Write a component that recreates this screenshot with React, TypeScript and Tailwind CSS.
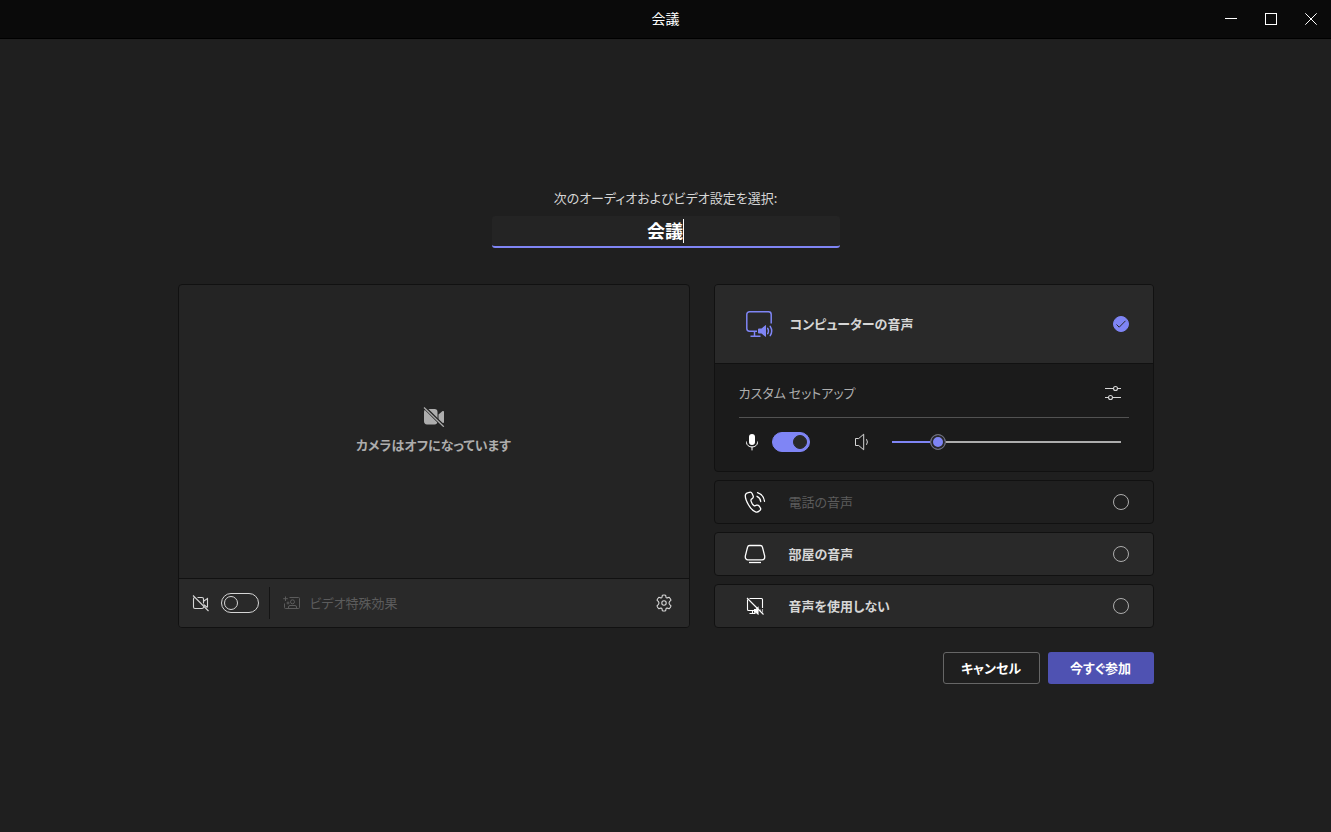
import { useState } from "react"
import type { ReactNode } from "react"

const audioOptions = [
  { id: "phone", label: "電話の音声", icon: <PhoneIcon />, disabled: true },
  { id: "room", label: "部屋の音声", icon: <RoomIcon />, disabled: false },
  { id: "none", label: "音声を使用しない", icon: <NoAudioIcon />, disabled: false },
]

function MinimizeIcon() {
  return (
    <svg width="12" height="12" viewBox="0 0 12 12" fill="none" stroke="currentColor" shapeRendering="crispEdges">
      <path d="M0 5.5h12" />
    </svg>
  )
}

function MaximizeIcon() {
  return (
    <svg width="12" height="12" viewBox="0 0 12 12" fill="none" stroke="currentColor">
      <rect x="0.5" y="0.5" width="11" height="11" />
    </svg>
  )
}

function CloseIcon() {
  return (
    <svg width="12" height="12" viewBox="0 0 12 12" fill="none" stroke="currentColor">
      <path d="M0.3 0.3l11.4 11.4M11.7 0.3L0.3 11.7" />
    </svg>
  )
}

function CameraOffFilledIcon() {
  return (
    <svg width="22" height="20" viewBox="0 0 22 20" fill="currentColor">
      <path d="M4 2h7.5A3 3 0 0 1 14.500 5v9a3 3 0 0 1-3 3.500H4A3.200 3.200 0 0 1 1 14.300V5.200A3.200 3.200 0 0 1 4 2z" />
      <path d="M15.500 7.500l3.800-3.200c.6-.5 1.700-.2 1.700.7v10c0 .9-1 1.200-1.700.7l-3.800-3.200z" />
      <path d="M1.200 0L21.500 20.300" stroke="#242424" strokeWidth="3.200" />
      <path d="M1 .5L20.800 19.800" stroke="currentColor" strokeWidth="1.200" />
    </svg>
  )
}

function CameraOffIcon() {
  return (
    <svg width="18" height="18" viewBox="0 0 18 18" fill="none" stroke="currentColor" strokeWidth="1.1">
      <path d="M5.500 3.500H10A1.500 1.500 0 0 1 11.500 5v4.500M11.500 12.500v.5a1.500 1.500 0 0 1-1.500 1.500H3A1.500 1.500 0 0 1 1.500 13V5A1.500 1.500 0 0 1 3 3.500" />
      <path d="M11.500 7.200l4-2.700v8.800M11.500 10.500l4 3" />
      <path d="M1 1.500l15.500 15.500" />
    </svg>
  )
}

function EffectsIcon() {
  return (
    <svg width="20" height="16" viewBox="0 0 20 16" fill="none" stroke="currentColor">
      <path d="M7.500 2.500H16.500a1 1 0 0 1 1 1v9a1 1 0 0 1-1 1H3.500a1 1 0 0 1-1-1V8.500" />
      <circle cx="10.500" cy="6.800" r="2" />
      <path d="M6.500 13.500v-1.500a1.500 1.500 0 0 1 1.500-1.500h5a1.500 1.500 0 0 1 1.500 1.500v1.500" />
      <path d="M3.500 1.500v4.500M1.200 3.700h4.600M6 6.500v3M4.500 8h3" />
    </svg>
  )
}

function GearIcon() {
  return (
    <svg width="18" height="18" viewBox="0 0 18 18" fill="none" stroke="currentColor" strokeWidth="1.100" strokeLinejoin="round">
      <path d="M7.400 1.200Q9 .8 10.600 1.200L11 3.200Q11.300 4 12.200 3.900L14.200 3.300Q15.500 4.600 16 6.200L14.500 7.700Q13.500 9 14.500 10.300L16 11.800Q15.500 13.400 14.200 14.700L12.200 14.100Q11.300 14 11 14.800L10.600 16.800Q9 17.200 7.400 16.800L7 14.800Q6.700 14 5.800 14.100L3.800 14.700Q2.500 13.400 2 11.800L3.500 10.300Q4.500 9 3.500 7.700L2 6.200Q2.500 4.600 3.800 3.300L5.800 3.900Q6.700 4 7 3.200Z" />
      <circle cx="9" cy="9" r="2.200" />
    </svg>
  )
}

function ComputerAudioIcon() {
  return (
    <svg width="28" height="28" viewBox="0 0 28 28" fill="none" stroke="currentColor" strokeWidth="1.500">
      <path d="M12 21.200H4.500A2.700 2.700 0 0 1 1.800 18.500V4.500A2.700 2.700 0 0 1 4.500 1.800h19A2.700 2.700 0 0 1 26.200 4.500V13.500" />
      <path d="M9.500 21.200v5M5.500 26.200h10" />
      <path d="M14 18.500h2.500l4-3.300c.2-.2.500 0 .5.300v11c0 .3-.3.500-.5.300l-4-3.300H14a1 1 0 0 1-1-1v-3a1 1 0 0 1 1-1z" fill="currentColor" stroke="none" />
      <path d="M22.700 18.300q1.500 2.700 0 5.400M25.200 16.300q3 4.700 0 9.400" strokeLinecap="round" />
    </svg>
  )
}

function CheckIcon() {
  return (
    <svg width="16" height="16" viewBox="0 0 16 16" fill="none" stroke="#292929" className="pointer-events-none absolute inset-0">
      <path d="M3.500 8.500l2.700 2.700L12.500 4.800" />
    </svg>
  )
}

function SlidersIcon() {
  return (
    <svg width="16" height="16" viewBox="0 0 16 16" fill="none" stroke="currentColor" strokeWidth="1.100">
      <path d="M0 3.500h8M12.500 3.500H16M0 12.500h3.500M7.500 12.500H16" />
      <circle cx="10.500" cy="3.500" r="2" />
      <circle cx="5.500" cy="12.500" r="2" />
    </svg>
  )
}

function MicIcon() {
  return (
    <svg width="14" height="18" viewBox="0 0 14 18" fill="none" stroke="currentColor">
      <rect x="4" y="1" width="6" height="11" rx="3" fill="currentColor" stroke="none" />
      <path d="M1.500 9v.5a5.500 4.500 0 0 0 11 0V9M7 14v3" strokeLinecap="round" />
    </svg>
  )
}

function SpeakerIcon() {
  return (
    <svg width="16" height="18" viewBox="0 0 16 18" fill="none" stroke="currentColor" strokeLinejoin="round">
      <path d="M1.500 5.500h3.200l5-4.300v15.600l-5-4.300H1.500z" />
      <path d="M12.700 6.500q1.600 2.500 0 5" strokeLinecap="round" />
    </svg>
  )
}

function PhoneIcon() {
  return (
    <svg width="22" height="22" viewBox="0 0 22 22" fill="none" stroke="currentColor" strokeWidth="1.300" strokeLinecap="round" strokeLinejoin="round">
      <path d="M4.200 1.700l1.400-.4c1-.3 2 .2 2.500 1.200l1 2.200c.4.900.2 1.800-.5 2.500L7.100 8.600c-.2.200-.2.400-.2.600.1 1 .5 2 1.100 3.100.6 1 1.300 1.800 2.100 2.400.2.100.4.200.6.100l1.900-.6c.9-.3 1.900 0 2.500.8l1.100 1.700c.6.800.5 2-.3 2.700l-.7.700c-1 .9-2.500 1.200-3.700.7C9.200 20 6.700 17.600 4.600 14 2.400 10.300 1.200 7 1.300 4.500c.1-1.300 1.200-2.400 2.900-2.800z" />
      <path d="M13 5.300a6.500 6.500 0 0 1 3.700 5.200M13.500 1.700a10.200 10.200 0 0 1 7 8.600" />
    </svg>
  )
}

function RoomIcon() {
  return (
    <svg width="22" height="20" viewBox="0 0 22 20" fill="none" stroke="currentColor" strokeWidth="1.300">
      <path d="M5.700 1.500h10.600a2.300 2.300 0 0 1 2.200 1.800l2.200 8.700v1.300a2.500 2.500 0 0 1-2.500 2.500H3.800a2.500 2.500 0 0 1-2.500-2.500V12L3.500 3.300a2.300 2.300 0 0 1 2.200-1.800z" />
      <path d="M5 18.500h12" />
    </svg>
  )
}

function NoAudioIcon() {
  return (
    <svg width="18" height="18" viewBox="0 0 18 18" fill="none" stroke="currentColor" strokeWidth="1.100">
      <path d="M3.500 1.500H15.500a1 1 0 0 1 1 1V11M8 13.500H2.500a1 1 0 0 1-1-1V2.500M6.500 13.500v3M3.500 16.500h6" />
      <path d="M8.500 12.500h1.500l2-2v6.500l-2-1.700H8.500z" fill="currentColor" />
      <path d="M1 1l16.500 16.500" />
      <path d="M14 12.500l.8 1.200M16.500 12v3.500" strokeOpacity="0.600" />
    </svg>
  )
}

function Toggle({ label, defaultChecked }: { label: string; defaultChecked?: boolean }) {
  return (
    <input
      type="checkbox"
      role="switch"
      aria-label={label}
      defaultChecked={defaultChecked}
      className="flex h-5 w-[38px] shrink-0 appearance-none items-center rounded-full border border-[#d6d6d6] px-0.5 before:size-[14px] before:rounded-full before:border before:border-[#d6d6d6] checked:justify-end checked:border-[#7f85f5] checked:bg-[#7f85f5] checked:before:border-[#292929] checked:before:bg-[#292929]"
    />
  )
}

function AudioRadio({ id, checked, disabled, onSelect }: { id: string; checked: boolean; disabled?: boolean; onSelect: () => void }) {
  return (
    <span className="relative size-4 shrink-0">
      <input
        id={id}
        type="radio"
        name="audio"
        checked={checked}
        disabled={disabled}
        onChange={onSelect}
        className="block size-4 appearance-none rounded-full border border-[#adadad] checked:border-[#7f85f5] checked:bg-[#7f85f5]"
      />
      {checked && <CheckIcon />}
    </span>
  )
}

function WindowButton({ label, children }: { label: string; children: ReactNode }) {
  return (
    <button aria-label={label} className="flex h-full w-10 items-center justify-center text-white">
      {children}
    </button>
  )
}

export default function App() {
  const [name, setName] = useState("会議")
  const [audio, setAudio] = useState("computer")
  const [volume, setVolume] = useState(18)

  return (
    <div className="flex min-h-screen flex-col bg-[#1f1f1f] font-['Noto_Sans_CJK_JP',sans-serif] text-[13px] leading-5 text-[#d6d6d6] [font-feature-settings:'palt']">
      {/* Title bar */}
      <header className="grid h-[39px] shrink-0 grid-cols-[1fr_auto_1fr] items-center border-b border-black bg-[#0a0a0a]">
        <h1 className="col-start-2 pb-0.5 text-sm text-white">会議</h1>
        <div className="flex h-full justify-end">
          <WindowButton label="最小化"><MinimizeIcon /></WindowButton>
          <WindowButton label="最大化"><MaximizeIcon /></WindowButton>
          <WindowButton label="閉じる"><CloseIcon /></WindowButton>
        </div>
      </header>

      <main className="flex flex-1 flex-col items-center justify-center px-6">
        <label htmlFor="meeting-name" className="leading-[21px]">次のオーディオおよびビデオ設定を選択:</label>
        <div className="mt-2 flex h-8 w-full max-w-[348px] items-center justify-center rounded-[3px] border-b-2 border-[#7f85f5] bg-[#242424]">
          <input
            id="meeting-name"
            value={name}
            onChange={(e) => setName(e.target.value)}
            className="min-w-0 pb-0.5 text-lg leading-6 font-bold text-white caret-transparent outline-none [field-sizing:content]"
          />
          <span className="h-6 w-px bg-white" />
        </div>

        <div className="mt-9 grid w-full max-w-[976px] grid-cols-[64fr_55fr] gap-6">
          {/* Camera preview */}
          <section className="flex flex-col overflow-hidden rounded border border-[#111111] bg-[#242424]">
            <div className="flex flex-1 flex-col items-center justify-center gap-2 pb-0.5 text-[#adadad]">
              <CameraOffFilledIcon />
              <p className="font-semibold">カメラはオフになっています</p>
            </div>
            <div className="flex h-[49px] items-center border-t border-[#111111] bg-[#292929] pr-4 pl-[13px]">
              <CameraOffIcon />
              <div className="ml-[11px]">
                <Toggle label="カメラ" />
              </div>
              <span className="mx-[10px] mr-3 h-8 w-px bg-[#141414]" />
              <button disabled className="flex items-center gap-2 text-[#5c5c5c]">
                <EffectsIcon />
                ビデオ特殊効果
              </button>
              <button aria-label="デバイスの設定" className="ml-auto">
                <GearIcon />
              </button>
            </div>
          </section>

          {/* Audio options */}
          <section className="flex flex-col gap-2">
            <div className="overflow-hidden rounded border border-[#111111] bg-[#1b1b1b]">
              <label htmlFor="computer" className="flex h-[79px] items-center border-b border-[#111111] bg-[#292929] pr-6 pl-[30px]">
                <span className="text-[#7f85f5]"><ComputerAudioIcon /></span>
                <span className="ml-[17px] flex-1 font-semibold">コンピューターの音声</span>
                <AudioRadio id="computer" checked={audio === "computer"} onSelect={() => setAudio("computer")} />
              </label>
              <div className="px-6">
                <div className="flex h-[54px] items-center justify-between border-b border-[#525252] pt-1 pr-2 text-[#adadad]">
                  カスタム セットアップ
                  <button aria-label="カスタム セットアップ" className="text-[#d6d6d6]">
                    <SlidersIcon />
                  </button>
                </div>
                <div className="flex h-[53px] items-center pr-2 pb-1.5 pl-[6px]">
                  <span className="text-white"><MicIcon /></span>
                  <div className="ml-[13px]">
                    <Toggle label="マイク" defaultChecked />
                  </div>
                  <span className="ml-11"><SpeakerIcon /></span>
                  <input
                    type="range"
                    aria-label="音量"
                    value={volume}
                    onChange={(e) => setVolume(Number(e.target.value))}
                    style={{ backgroundImage: `linear-gradient(to right, #7f85f5 ${volume}%, #adadad ${volume}%)` }}
                    className="ml-[22px] h-0.5 min-w-0 flex-1 appearance-none [&::-webkit-slider-thumb]:size-4 [&::-webkit-slider-thumb]:appearance-none [&::-webkit-slider-thumb]:rounded-full [&::-webkit-slider-thumb]:border [&::-webkit-slider-thumb]:border-[#6e6e6e] [&::-webkit-slider-thumb]:bg-[#7f85f5] [&::-webkit-slider-thumb]:shadow-[inset_0_0_0_2px_#292929]"
                  />
                </div>
              </div>
            </div>

            {audioOptions.map((option) => (
              <label
                key={option.id}
                htmlFor={option.id}
                className={`flex h-11 items-center rounded border border-[#111111] pr-6 pl-[29px] ${option.disabled ? "bg-[#1f1f1f] text-[#5c5c5c]" : "bg-[#292929] font-semibold"}`}
              >
                <span className="flex w-[22px] justify-center text-white">{option.icon}</span>
                <span className="ml-[23px] flex-1">{option.label}</span>
                <AudioRadio
                  id={option.id}
                  checked={audio === option.id}
                  disabled={option.disabled}
                  onSelect={() => setAudio(option.id)}
                />
              </label>
            ))}
          </section>
        </div>

        <div className="mt-6 flex w-full max-w-[976px] justify-end gap-2 font-semibold text-white">
          <button className="h-8 w-[97px] rounded-[3px] border border-[#666666]">キャンセル</button>
          <button className="h-8 w-[106px] rounded-[3px] bg-[#4f52b2]">今すぐ参加</button>
        </div>
      </main>
    </div>
  )
}
